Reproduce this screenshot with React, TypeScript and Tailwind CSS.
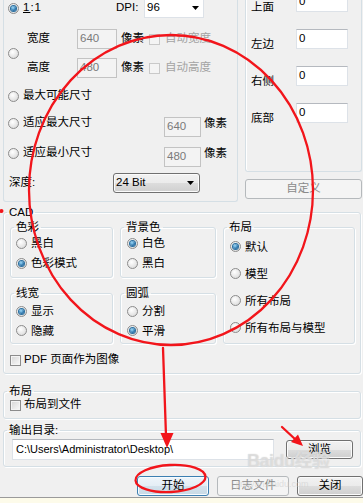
import React from "react";

const font = "font-[family-name:'Liberation_Sans','Noto_Sans_CJK_SC',sans-serif]";

function Radio({ on }: { on?: boolean }) {
  return (
    <span className="w-[11px] h-[11px] shrink-0 rounded-full border border-[#8c8c8c] bg-[radial-gradient(circle_at_40%_35%,#ffffff,#d4d4d4)] flex items-center justify-center">
      {on && (
        <span className="w-[5px] h-[5px] rounded-full bg-[radial-gradient(circle_at_40%_35%,#9fdcfb,#155f9a_75%)] shadow-[0_0_0_1px_#2a6f9f]" />
      )}
    </span>
  );
}

function Check({ disabled }: { disabled?: boolean }) {
  return (
    <span
      className={`w-[11px] h-[11px] shrink-0 border ${
        disabled
          ? "border-[#c9c9c9] bg-[#f4f4f4]"
          : "border-[#8c8c8c] bg-gradient-to-br from-[#d6d6d6] to-[#fafafa] shadow-[inset_0_0_0_1px_#f4f4f4]"
      }`}
    />
  );
}

function Btn({
  children,
  className = "",
  kind = "normal",
}: {
  children: React.ReactNode;
  className?: string;
  kind?: "normal" | "default" | "disabled";
}) {
  const look =
    kind === "disabled"
      ? "border-[#b5b9bc] bg-[#f4f4f4] text-[#8a8a8a]"
      : kind === "default"
      ? "border-[#3c7fb1] bg-[linear-gradient(#eef5fa_0%,#e4eef5_50%,#d3e2ec_50%,#c8dae6_100%)] shadow-[inset_0_0_0_1px_#f6fbfe]"
      : "border-[#707070] bg-[linear-gradient(#f2f2f2_0%,#ebebeb_50%,#dddddd_50%,#cfcfcf_100%)] shadow-[inset_0_0_0_1px_#fbfbfb]";
  return (
    <div className={`shrink-0 flex items-center justify-center border rounded-[3px] ${look} ${className}`}>
      {children}
    </div>
  );
}

function Box({
  children,
  className = "",
  disabled,
}: {
  children?: React.ReactNode;
  className?: string;
  disabled?: boolean;
}) {
  return (
    <div
      className={`shrink-0 flex items-center border ${
        disabled
          ? "bg-[#f3f3f3] border-[#c3c3c3] text-[#7a7a7a]"
          : "bg-white border-[#dde2e8] border-t-[#b5b9bf]"
      } ${className}`}
    >
      {children}
    </div>
  );
}

function Arrow() {
  return (
    <svg width="7" height="4" viewBox="0 0 7 4" className="ml-auto shrink-0">
      <path d="M0 0h7L3.5 4z" fill="#000" />
    </svg>
  );
}

function Group({
  title,
  className = "",
  children,
}: {
  title: string;
  className?: string;
  children?: React.ReactNode;
}) {
  return (
    <fieldset className={`min-w-0 border border-[#d5dfe5] rounded-[3px] shadow-[inset_1px_1px_0_#fff,1px_1px_0_#fff] ${className}`}>
      <legend className="ml-[3px] px-[2px] leading-[16px]">{title}</legend>
      {children}
    </fieldset>
  );
}

function RadioRow({ on, label, h = "h-[20px]" }: { on?: boolean; label: string; h?: string }) {
  return (
    <div className={`flex items-center ${h}`}>
      <Radio on={on} />
      <span className="ml-[4px] leading-[16px]">{label}</span>
    </div>
  );
}

export default function App() {
  return (
    <div className={`relative w-[363px] h-[503px] overflow-hidden bg-[#f0f0f0] text-[11.5px] text-black flex flex-col ${font}`}>
      {/* top: size options + margins */}
      <div className="flex h-[202px] shrink-0">
        <div className="ml-[3px] w-[235px] h-[202px] border-x border-b border-[#d5dfe5] rounded-b-[3px] flex flex-col">
          <div className="mt-[-2px] h-[20px] flex items-center pl-[4px]">
            <Radio on />
            <span className="ml-[4px] w-[93px] tracking-[1px]">
              <u>1</u>:1
            </span>
            <span className="w-[28px]">DPI:</span>
            <Box className="w-[60px] h-[20px] pl-[2px] pr-[4px]">
              96
              <Arrow />
            </Box>
          </div>

          <div className="mt-[11px] flex items-center pl-[4px]">
            <Radio />
            <div className="ml-[8px] flex flex-col gap-[9px]">
              {[
                ["宽度", "自动宽度"],
                ["高度", "自动高度"],
              ].map(([a, b]) => (
                <div key={a} className="h-[20px] flex items-center">
                  <span className="w-[50px]">{a}</span>
                  <Box disabled className="w-[40px] h-[20px] pl-[2px]">
                    {a === "宽度" ? "640" : "480"}
                  </Box>
                  <span className="ml-[4px] w-[28px]">像素</span>
                  <Check disabled />
                  <span className="ml-[5px] text-[#a3a3a3]">{b}</span>
                </div>
              ))}
            </div>
          </div>

          <div className="mt-[8px] h-[20px] flex items-center pl-[4px]">
            <Radio />
            <span className="ml-[4px]">最大可能尺寸</span>
          </div>

          {[
            ["适应最大尺寸", "640", "mt-[7px]"],
            ["适应最小尺寸", "480", "mt-[6px]"],
          ].map(([label, v, mt]) => (
            <div key={label} className={`${mt} h-[24px] flex pl-[4px]`}>
              <div className="h-[20px] flex items-center">
                <Radio />
                <span className="ml-[4px] w-[141px]">{label}</span>
              </div>
              <Box disabled className="self-end w-[37px] h-[20px] pl-[2px]">
                {v}
              </Box>
              <span className="ml-[3px] leading-[20px]">像素</span>
            </div>
          ))}

          <div className="mt-[6px] h-[20px] flex items-center pl-[5px]">
            <span className="w-[104px]">深度:</span>
            <Btn className="w-[87px] h-[20px] !justify-start pl-[2px] pr-[5px]">
              24 Bit
              <Arrow />
            </Btn>
          </div>
        </div>

        <div className="ml-[7px] w-[117px] flex flex-col">
          <div className="h-[172px] border-x border-b border-[#d5dfe5] rounded-b-[3px] shadow-[inset_1px_0_0_#fff] flex flex-col gap-[17px]">
            {["上面", "左边", "右侧", "底部"].map((t, i) => (
              <div key={t} className={`h-[20px] flex items-start ${i === 0 ? "mt-[-8px]" : ""}`}>
                <span className="pl-[5px] w-[50px] mt-[7px] leading-[16px]">{t}</span>
                <Box className="w-[52px] h-[20px] pl-[2px] !items-start pt-[1px] leading-[14px]">0</Box>
              </div>
            ))}
          </div>
          <Btn kind="disabled" className="mt-[7px] h-[20px] w-full">
            自定义
          </Btn>
        </div>
      </div>

      {/* CAD */}
      <Group title="CAD" className="mt-[2px] ml-[3px] w-[358px] h-[170px] shrink-0">
        <div className="mt-[-1px] pl-[6px] flex">
          <div className="w-[103px] flex flex-col">
            <Group title="色彩" className="h-[59px]">
              <div className="mt-[-2px] pl-[5px] flex flex-col">
                <RadioRow label="黑白" />
                <RadioRow on label="色彩模式" />
              </div>
            </Group>
            <Group title="线宽" className="mt-[7px] h-[59px]">
              <div className="pl-[5px] flex flex-col">
                <RadioRow on label="显示" />
                <RadioRow label="隐藏" h="h-[19px]" />
              </div>
            </Group>
          </div>
          <div className="ml-[7px] w-[96px] flex flex-col">
            <Group title="背景色" className="h-[59px]">
              <div className="mt-[-2px] pl-[6px] flex flex-col">
                <RadioRow on label="白色" />
                <RadioRow label="黑白" />
              </div>
            </Group>
            <Group title="圆弧" className="mt-[7px] h-[59px]">
              <div className="pl-[6px] flex flex-col">
                <RadioRow label="分割" />
                <RadioRow on label="平滑" h="h-[19px]" />
              </div>
            </Group>
          </div>
          <Group title="布局" className="ml-[7px] w-[132px] h-[125px]">
            <div className="mt-[-2px] pl-[6px] flex flex-col">
              <RadioRow on label="默认" h="h-[27px]" />
              <RadioRow label="模型" h="h-[27px]" />
              <RadioRow label="所有布局" h="h-[27px]" />
              <RadioRow label="所有布局与模型" h="h-[27px]" />
            </div>
          </Group>
        </div>
        <div className="mt-[6px] h-[20px] flex items-center pl-[6px]">
          <Check />
          <span className="ml-[3px]">PDF 页面作为图像</span>
        </div>
      </Group>

      {/* layout to file */}
      <Group title="布局" className="mt-[9px] ml-[3px] w-[358px] h-[36px] shrink-0">
        <div className="mt-[-2px] h-[16px] flex items-center pl-[6px]">
          <Check />
          <span className="ml-[3px]">布局到文件</span>
        </div>
      </Group>

      {/* output directory */}
      <Group title="输出目录:" className="mt-[3px] ml-[3px] w-[358px] h-[45px] shrink-0">
        <div className="mt-[1px] flex items-center pl-[8px]">
          <Box className="w-[262px] h-[21px] pl-[3px] text-[11px] font-[family-name:'Liberation_Sans',sans-serif]">
            C:\Users\Administrator\Desktop\
          </Box>
          <Btn className="ml-[12px] w-[67px] h-[19px]">浏览</Btn>
        </div>
      </Group>

      {/* action buttons */}
      <div className="mt-[9px] flex gap-[8px] pl-[137px] shrink-0">
        <Btn kind="default" className="w-[72px] h-[20px]">
          开始
        </Btn>
        <Btn kind="disabled" className="w-[72px] h-[20px]">
          日志文件
        </Btn>
        <Btn className="w-[66px] h-[20px]">关闭</Btn>
      </div>
      <div className="mt-[1px] flex-1 border-t border-[#9a9a9a] bg-[#fdfbea]" />

      {/* watermark */}
      <span className="absolute left-[247px] top-[451px] pointer-events-none text-[18px] font-bold leading-[20px] tracking-[-0.5px] text-white/40 [text-shadow:0_0_1px_#c4c4c4]">
        Baidu经验
      </span>
      <span className="absolute left-[236px] top-[479px] text-[9px] leading-[10px] text-[#cfcfcf]/60 pointer-events-none">
        jingyan.baidu.com
      </span>

      {/* red annotations */}
      <svg className="absolute left-0 top-0 pointer-events-none" width="363" height="503" viewBox="0 0 363 503">
        <g stroke="#f2151b" strokeWidth="2.3" fill="none" strokeLinecap="round">
          <ellipse cx="171" cy="190" rx="142" ry="155" />
          <path d="M163 348 L166 436" />
          <path d="M282 427 L296 440" />
          <ellipse cx="170.5" cy="478.5" rx="35" ry="13.5" transform="rotate(-3 170.5 478.5)" />
        </g>
        <g fill="#f2151b">
          <path d="M160.5 433 L173.5 433 L167 448 Z" />
          <path d="M291 442 L298 434.5 L303 446 Z" />
          <circle cx="1.5" cy="211" r="2" />
        </g>
      </svg>
    </div>
  );
}
